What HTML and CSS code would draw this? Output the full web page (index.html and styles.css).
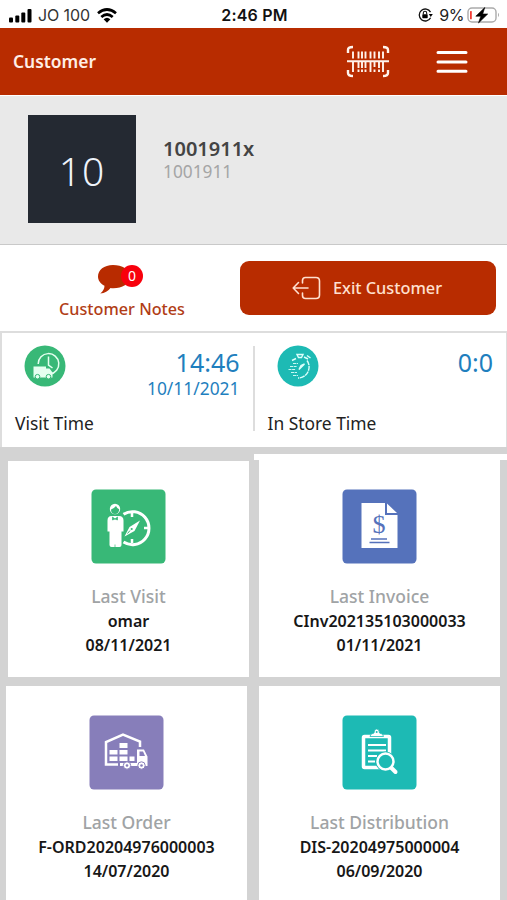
FILE: index.html
```html
<!DOCTYPE html>
<html lang="en">
<head>
<meta charset="utf-8">
<title>Customer</title>
<link rel="stylesheet" href="styles.css">
</head>
<body>
<div class="screen">
  <div class="status">
    <div class="status-left">
      <svg width="24" height="15" viewBox="0 0 24 15"><rect x="0" y="9.5" width="4" height="5" rx="1"/><rect x="6.3" y="7.5" width="4" height="7" rx="1"/><rect x="12.3" y="4.5" width="4" height="10" rx="1"/><rect x="18.5" y="1" width="4" height="13.5" rx="1"/></svg>
      <span class="carrier">JO 100</span>
      <svg class="wifi" width="20" height="15" viewBox="0 0 20 15"><g fill="none" stroke="#000" stroke-width="2.7"><path d="M1 5.3Q10-2.3 19 5.3"/><path d="M4.3 9Q10 4 15.7 9"/></g><path d="M6.6 11.3Q10 8.2 13.4 11.3L10 14.8Z"/></svg>
    </div>
    <span class="clock">2:46 PM</span>
    <div class="status-right">
      <svg width="15" height="14" viewBox="0 0 15 14"><path d="M12.5 4.1A6 6 0 1 0 12.6 9.7" fill="none" stroke="#111" stroke-width="1.3"/><path d="M10.8 6h4L12.8 9z"/><rect x="4.3" y="6.3" width="5.4" height="4" rx=".7"/><path d="M5.3 6.5V5a1.7 1.7 0 0 1 3.4 0v1.5" fill="none" stroke="#111" stroke-width="1.1"/></svg>
      <span class="charge">9%</span>
      <svg width="33" height="17" viewBox="0 0 33 17"><rect x="1" y="1" width="28" height="14" rx="4" fill="none" stroke="#aaa" stroke-width="1.4"/><path d="M31 5.8q2 2.2 0 4.4z" fill="#aaa"/><rect x="3" y="4" width="1.8" height="8.3" rx=".6" fill="#f33c35"/><path d="M17.8.5 8.8 9.2h5l-2.3 6.8 9.2-9h-5z" stroke="#000" stroke-width=".6"/></svg>
    </div>
  </div>

  <header class="header">
    <h1>Customer</h1>
    <svg class="barcode" width="44" height="33" viewBox="0 0 44 33" fill="none" stroke="#fff3ec" stroke-width="2"><path d="M2 8V5q0-3 5-3M37 2q5 0 5 3v3M2 25v3q0 3 5 3M37 31q5 0 5-3v-3" stroke-width="2.4"/><path d="M1 16.2h42"/><path d="M7 6.500v7M12.500 6.500v7M16 6.500v7M19.500 6.500v7M24.500 6.500v7M28.500 6.500v7M33 6.500v7M37 6.500v7M7 17v10M12.500 17v6M16 17v6M19.500 17v6M24.500 17v10M28.500 17v5M33 17v6M37 17v10M12.500 24.500v2.500M16 24.500v2.500M19.500 24.500v2.500M28.500 24.500v2.500M33 24.500v2.500" stroke-width="1.9"/></svg>
    <svg class="menu" width="32" height="24" viewBox="0 0 32 24" stroke="#fff" stroke-width="3" stroke-linecap="round"><path d="M2 2.500h28M2 12h28M2 21.300h28"/></svg>
  </header>

  <section class="profile">
    <div class="avatar">10</div>
    <div class="identity"><div class="name">1001911x</div><div class="code">1001911</div></div>
  </section>

  <section class="actions">
    <div class="notes">
      <div class="bubble">
        <svg width="36" height="31" viewBox="0 0 36 31"><path d="M16 1C7 1 1 6 1 12.500c0 4 2.500 7.200 6.500 9.300Q7.500 26 3.300 29.500 10 28.800 13.500 24q1 .2 3 .2C25 24.200 33 20 33 12.500S25 1 16 1z" fill="#b82b00"/></svg>
        <span class="badge">0</span>
      </div>
      <div class="notes-label">Customer Notes</div>
    </div>
    <div class="exit">
      <svg width="29" height="24" viewBox="0 0 29 24" fill="none" stroke="#ffe0cf" stroke-width="1.600" stroke-linecap="round" stroke-linejoin="round"><path d="M10.500 7V4.500Q10.500 1.500 13.500 1.500H24q3.500 0 3.500 3.500v14q0 3.500-3.500 3.500H13.500q-3 0-3-3V17M16 12H1.500M6.500 6.500 1.200 12l5.300 5.500"/></svg>
      <span>Exit Customer</span>
    </div>
  </section>

  <section class="times">
    <div class="time">
      <div class="time-top">
        <svg width="42" height="42" viewBox="0 0 42 42"><circle cx="21" cy="21" r="20.500" fill="#38b877"/><g fill="none" stroke="#e5fff0" stroke-width="1.500"><path d="M14.200 19A10.300 10.300 0 1 1 26 29.100"/><path d="M24.500 11.500v8.500l4 3"/></g><path d="M9.500 21.500h12.500v2h3.500l3 4v5H9.500z" fill="#e5fff0"/><g fill="#e5fff0" stroke="#38b877"><circle cx="13.500" cy="31.700" r="2.300"/><circle cx="24.500" cy="31.700" r="2.300"/></g></svg>
        <div class="values"><div class="hour">14:46</div><div class="date">10/11/2021</div></div>
      </div>
      <div class="time-label">Visit Time</div>
    </div>
    <div class="divider"></div>
    <div class="time store">
      <div class="time-top">
        <svg width="42" height="42" viewBox="0 0 42 42"><circle cx="21" cy="21" r="20.500" fill="#1dbab4"/><g fill="none" stroke="#dcfffb" stroke-width="1.400"><path d="M20 9.500h6l-1.500 3h-3zM27 12l4 2M30 10.500l3.500 2.500M19 13.500l-4 2"/><path d="M30 15.500A11 11 0 0 1 21 33" stroke-dasharray="5 .7"/><path d="M22 24.500l5.500-5.500-3.500 1.500z"/><path d="M16 18.500h5M13 21.500h7M11.500 24.500h7M14 27.500h6M16 30.500h5" stroke-width=".9" stroke-dasharray="3 .6"/></g></svg>
        <div class="values"><div class="hour">0:0</div></div>
      </div>
      <div class="time-label">In Store Time</div>
    </div>
  </section>

  <main class="grid">
    <div class="cell c1"><article class="card">
      <svg class="tile" width="75" height="75" viewBox="0 0 75 75"><rect x=".5" y=".5" width="74" height="74" rx="4.500" fill="#38b877"/><circle cx="24" cy="20" r="5.200" fill="#fff"/><path d="M20 20.500q3-1 5-3.500 1 2.500 3.200 3.300-.2 4.700-4.200 4.700t-4-4.500z" fill="#38b877"/><path d="M20.500 27h7.500q4.500 0 4.500 4.500v11h-2V56q0 2-2 2h-8q-2 0-2-2V42.500h-2v-11q0-4.500 4-4.500z" fill="#fff"/><path d="m21.500 28 2.500 2 2.500-2v3L24 30l-2.500 1zM24 55.500v3" fill="#38b877" stroke="#38b877" stroke-width=".7"/><path d="M32.500 25.300A16.500 16.500 0 1 1 32.500 53" fill="none" stroke="#fff" stroke-width="3"/><path d="M41 24v4M41 50v4M53 39h4" stroke="#fff" stroke-width="2.500"/><path d="M49 31.500 43.500 42l-10 5.500 5-9.500z" fill="#fff"/><circle cx="40.700" cy="40" r="1.100" fill="#38b877"/><path d="m36.500 44.500 2.500-3" stroke="#38b877"/></svg>
      <div class="title">Last Visit</div><div class="line">omar</div><div class="line">08/11/2021</div>
    </article></div>
    <div class="cell c2"><article class="card">
      <svg class="tile" width="75" height="75" viewBox="0 0 75 75"><rect x=".5" y=".5" width="74" height="74" rx="4.500" fill="#5572bb"/><path d="M19.500 14H43v12h12.500v33h-36z" fill="#fff"/><path d="M45 14.500 55 24H45z" fill="#fff"/><text x="37" y="43.500" class="dollar">$</text><path d="M29 50h16M27.500 53.500h20" stroke="#5572bb" stroke-width="1.500"/></svg>
      <div class="title">Last Invoice</div><div class="line">CInv202135103000033</div><div class="line">01/11/2021</div>
    </article></div>
    <div class="cell c3"><article class="card">
      <svg class="tile" width="75" height="75" viewBox="0 0 75 75"><rect x=".5" y=".5" width="74" height="74" rx="4.500" fill="#877eba"/><path d="M29 49.500H17V27l17-7.500L51 26.500V32M31 49.500h3" fill="none" stroke="#fff" stroke-width="2.500"/><path d="M30.500 28h8v5h-8zM20.500 35h8v4.500h-8zM30.500 35h8v4.500h-8zM20.500 41.500h8V46h-8zM30.500 41.500h8V46h-8zM40.500 41.500h5V46h-5zM31 48h17V34.500h7l3.500 7V51H31z" fill="#fff"/><path d="M50.500 36.500h3.500l2 4.500h-5.500z" fill="#877eba"/><g fill="#fff" stroke="#877eba"><circle cx="38" cy="50.500" r="3.700"/><circle cx="52.500" cy="50.500" r="3.700"/></g><circle cx="38" cy="50.500" r="1.300" fill="#877eba"/><circle cx="52.500" cy="50.500" r="1.300" fill="#877eba"/></svg>
      <div class="title">Last Order</div><div class="line">F-ORD20204976000003</div><div class="line">14/07/2020</div>
    </article></div>
    <div class="cell c4"><article class="card">
      <svg class="tile" width="75" height="75" viewBox="0 0 75 75"><rect x=".5" y=".5" width="74" height="74" rx="4.500" fill="#1dbab4"/><rect x="21.500" y="21.500" width="26" height="31" rx="1" fill="none" stroke="#fff" stroke-width="3.500"/><path d="M28 21.500q0-3 4-3.500 0-4 2.700-4t2.800 4q4 .5 4 3.500z" fill="#fff" stroke="#1dbab4" stroke-width=".8"/><circle cx="34.700" cy="17" r="1" fill="#1dbab4"/><path d="M26 30h18M26 35.500h18M26 41h9M26 46.500h7" stroke="#fff" stroke-width="2"/><circle cx="43.500" cy="46.500" r="10" fill="#1dbab4"/><path d="m49.500 53 4 4" stroke="#fff" stroke-width="4" stroke-linecap="round"/><circle cx="43.500" cy="46.500" r="8" fill="#1dbab4" stroke="#fff" stroke-width="2.500"/></svg>
      <div class="title">Last Distribution</div><div class="line">DIS-20204975000004</div><div class="line">06/09/2020</div>
    </article></div>
  </main>
</div>
</body>
</html>
```

FILE: styles.css
```css
* { box-sizing: border-box; }
body { margin: 0; background: #d3d3d3; font-family: "Noto Sans", "Open Sans", sans-serif; }
svg { display: block; flex: none; }
.screen { width: 507px; height: 900px; overflow: hidden; }

.status { height: 28px; background: #fff; display: grid; grid-template-columns: 1fr auto 1fr; align-items: center; padding: 2px 7px 0 9px; font: 16px/24px Inter, sans-serif; color: #111; }
.status-left, .status-right { display: flex; align-items: center; }
.carrier { margin-left: 5px; color: #333; letter-spacing: -.1px; }
.wifi { margin-left: 7px; }
.clock { font-weight: 600; font-size: 16px; letter-spacing: .2px; }
.status-right { justify-content: flex-end; }
.charge { margin: 0 3px 0 6px; color: #222; letter-spacing: -.4px; }

.header { height: 67px; background: #b82c00; display: flex; align-items: center; padding: 0 39px 0 13px; }
.header h1 { margin: 0 auto 2px 0; font-size: 17.400px; line-height: 24px; font-weight: 600; color: #ffeee6; }
.menu { margin-left: 46px; }

.profile { height: 150px; background: #e9e9e9; border-top: 1px solid #fff; border-bottom: 1px solid #c9c9c9; padding: 19px 28px; display: flex; }
.avatar { width: 108px; height: 108px; background: #242932; color: #eef3fa; font-size: 39px; font-weight: 300; line-height: 111px; text-align: center; letter-spacing: 1px; }
.identity { margin-left: 27px; padding-top: 21px; }
.name { font-size: 20px; line-height: 26px; font-weight: 600; color: #444; }
.code { font-size: 17.300px; line-height: 20px; color: #a5a5a5; }

.actions { height: 86px; background: #fff; display: flex; padding-top: 16px; }
.notes { width: 240px; padding-left: 4px; display: flex; flex-direction: column; align-items: center; }
.bubble { position: relative; width: 50px; height: 36px; padding-top: 3px; }
.badge { position: absolute; left: 24px; top: 4px; width: 22px; height: 22px; border-radius: 50%; background: #f8000c; color: #fff; font-size: 14px; line-height: 22px; text-align: center; }
.notes-label { font-size: 16.200px; line-height: 24px; font-weight: 500; color: #b13d16; }
.exit { width: 256px; height: 54px; border-radius: 9px; background: #b82c00; color: #ffe0cf; display: flex; align-items: center; padding-left: 52px; gap: 12px; font-size: 16.300px; font-weight: 500; }

.times { height: 116px; background: #fff; border: 2px solid #ddd; border-right-width: 1px; border-bottom: 0; display: flex; }
.time { width: 251px; padding: 12px 13px 0 13px; }
.time-top { height: 64px; display: flex; justify-content: space-between; padding-left: 9px; }
.store { width: 252px; padding-left: 13px; }
.values { text-align: right; color: #1f7fbe; }
.hour { font-size: 25px; line-height: 34px; }
.date { font-size: 17.400px; line-height: 19px; }
.time-label { font-size: 17.400px; line-height: 24px; margin-top: 2px; color: #222; }
.divider { width: 2px; height: 85px; margin-top: 13px; background: #ddd; }

.grid { display: grid; grid-template-columns: 254px 253px; grid-template-rows: 239px 214px; }
.card { background: #fff; padding-top: 28px; display: flex; flex-direction: column; align-items: center; height: 100%; }
.c1 { padding: 14px 5px 9px 8px; }
.c2 { margin-top: 7px; padding: 0 7px 9px 5px; border-top: 6px solid #fff; }
.c2 .card { padding-top: 29px; }
.c3 { padding: 0 7px 0 6px; }
.c4 { padding: 0 7px 0 5px; }
.c3 .card, .c4 .card { padding-top: 29px; }
.c2 .card { margin-top: 0; }
.title { margin-top: 19px; font-size: 17.500px; line-height: 26px; font-weight: 500; color: #a0a3a5; }
.line { font-size: 16px; line-height: 24.300px; font-weight: 600; color: #171717; }
.dollar { font: 26px "Liberation Serif", serif; fill: #5572bb; text-anchor: middle; }
```
